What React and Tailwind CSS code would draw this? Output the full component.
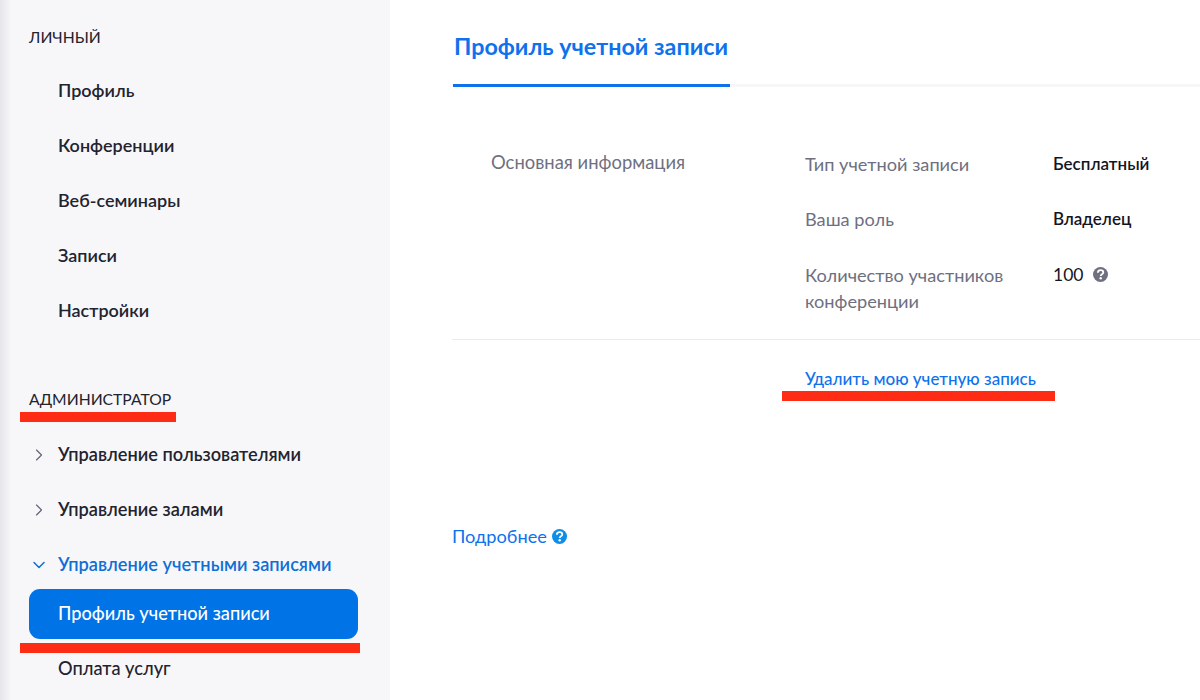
import React from "react";
import { ChevronRight, ChevronDown } from "lucide-react";

const font = "font-['Lato','Noto_Sans','Open_Sans',sans-serif]";

function Help({ color }) {
  return (
    <svg width="15" height="15" viewBox="0 0 15 15" className="shrink-0">
      <circle cx="7.5" cy="7.5" r="7.5" fill={color} />
      <path d="M4.8 5.8C4.9 4.2 6 3.2 7.6 3.2C9.2 3.2 10.3 4.2 10.3 5.5C10.3 7.4 7.7 7.2 7.7 9" fill="none" stroke="#fff" strokeWidth="1.8" />
      <circle cx="7.7" cy="11.2" r="1.2" fill="#fff" />
    </svg>
  );
}

function Item({ children }) {
  return <div className="h-[55px] pl-[58px] flex items-center text-[18px] font-semibold text-[#23232f]">{children}</div>;
}

function ExpItem({ children, open }) {
  return (
    <div className={`h-[55px] pl-[29px] flex items-center text-[18.2px] font-semibold ${open ? "text-[#0e6fd6]" : "text-[#23232f]"}`}>
      <span className="w-[29px] flex">
        {open ? <ChevronDown size={20} strokeWidth={1.8} color="#0e6fd6" /> : <ChevronRight size={20} strokeWidth={1.3} color="#5f6070" />}
      </span>
      {children}
    </div>
  );
}

function Row({ label, children, h }) {
  return (
    <div className={`flex ${h}`}>
      <div className="w-[248px] text-[18.2px] leading-[26px] text-[#6e7080]">{label}</div>
      <div className="text-[17px] leading-[26px] text-[#15151f] flex items-start gap-[10px]">{children}</div>
    </div>
  );
}

export default function App() {
  return (
    <div className={`${font} w-[1200px] h-[700px] overflow-hidden flex bg-white`}>
      <aside className="relative w-[390px] h-full shrink-0 bg-[#f7f7fa] bg-gradient-to-r from-[#e6e6ea] from-0% via-[#f7f7fa] via-[3%] to-[#f7f7fa]">
        <div className="h-[63px] pl-[29px] pt-[27px] text-[15.7px] leading-[20px] text-[#23232f]">ЛИЧНЫЙ</div>
        <Item>Профиль</Item>
        <Item>Конференции</Item>
        <Item>Веб-семинары</Item>
        <Item>Записи</Item>
        <Item>Настройки</Item>
        <div className="relative h-[90px] pl-[29px] pt-[52px] mt-[-1px] text-[15.7px] leading-[20px] text-[#23232f]">
          АДМИНИСТРАТОР
          <div className="absolute left-[20px] top-[75px] w-[156px] h-[10px] bg-[#fe2c14]" />
        </div>
        <ExpItem>Управление пользователями</ExpItem>
        <ExpItem>Управление залами</ExpItem>
        <ExpItem open>Управление учетными записями</ExpItem>
        <div className="relative ml-[29px] mt-[-3px] w-[329px] h-[50px] rounded-[11px] bg-[#0073e6] text-white text-[18.2px] font-medium pl-[29px] flex items-center">
          Профиль учетной записи
          <div className="absolute left-[-9px] top-[54px] w-[340px] h-[10px] bg-[#fe2c14]" />
        </div>
        <div className="h-[60px] pl-[58px] flex items-center text-[18.2px] font-medium text-[#23232f]">Оплата услуг</div>
      </aside>

      <main className="flex-1 pl-[62px]">
        <div className="h-[87px] border-b-[3px] border-[#f7f7f8]">
          <div className="ml-[1px] w-[277px] h-[87px] border-b-[3px] border-[#0e72ed] pl-[1px] pt-[31px] text-[23.3px] leading-[30px] font-bold whitespace-nowrap text-[#0e72ed]">
            Профиль учетной записи
          </div>
        </div>
        <div className="h-[253px] flex border-b border-[#ececf0]">
          <div className="w-[353px] pl-[39px] pt-[62px] text-[18.4px] leading-[26px] text-[#6e7080]">Основная информация</div>
          <div className="pt-[64px] flex flex-col">
            <Row label="Тип учетной записи" h="h-[55px]"><span className="font-semibold">Бесплатный</span></Row>
            <Row label="Ваша роль" h="h-[56px]"><span className="font-semibold">Владелец</span></Row>
            <Row label="Количество участников конференции" h="h-[52px]">
              <span className="text-[17.5px]">100</span>
              <span className="mt-[5px]"><Help color="#6e7080" /></span>
            </Row>
          </div>
        </div>
        <div className="relative h-[183px] pl-[353px] pt-[26px] text-[17px] leading-[26px] text-[#0e72ed] font-medium">
          Удалить мою учетную запись
          <div className="absolute left-[330px] top-[51px] w-[273px] h-[10px] bg-[#fe2c14]" />
        </div>
        <div className="flex items-center gap-[5px] text-[18.2px] leading-[26px] text-[#0e72ed]">
          Подробнее <Help color="#0e8ee9" />
        </div>
      </main>
    </div>
  );
}
